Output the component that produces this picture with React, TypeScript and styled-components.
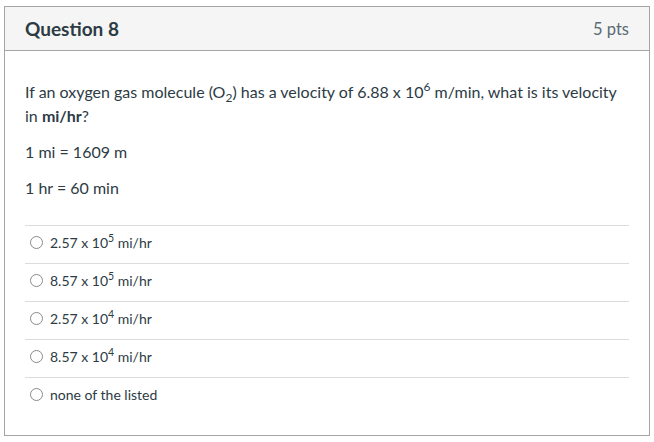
import React from "react";
import styled, { createGlobalStyle } from "styled-components";

const GlobalStyle = createGlobalStyle`
    html, body {
        margin: 0;
        padding: 0;
        background: #ffffff;
    }
    body {
        font-family: Lato, "Noto Sans", sans-serif;
        color: #2d3b45;
    }
`;

type Answer = {
    id: string;
    label: React.ReactNode;
};

const answers: Answer[] = [
    { id: "a1", label: <>2.57 x 10<Sup>5</Sup> mi/hr</> },
    { id: "a2", label: <>8.57 x 10<Sup>5</Sup> mi/hr</> },
    { id: "a3", label: <>2.57 x 10<Sup>4</Sup> mi/hr</> },
    { id: "a4", label: <>8.57 x 10<Sup>4</Sup> mi/hr</> },
    { id: "a5", label: <>none of the listed</> },
];

export default function App() {
    return (
        <Page>
            <GlobalStyle />
            <QuestionCard>
                <Header>
                    <Title>Question 8</Title>
                    <Points>5 pts</Points>
                </Header>
                <Body>
                    <Text>
                        If an oxygen gas molecule (O<Sub>2</Sub>) has a velocity of 6.88 x 10
                        <Sup>6</Sup> m/min, what is its velocity in <strong>mi/hr</strong>?
                    </Text>
                    <Text>1 mi = 1609 m</Text>
                    <Text>1 hr = 60 min</Text>
                    <AnswerList>
                        {answers.map((a) => (
                            <AnswerRow key={a.id}>
                                <Radio type="radio" name="q8" id={a.id} />
                                <AnswerLabel htmlFor={a.id}>{a.label}</AnswerLabel>
                            </AnswerRow>
                        ))}
                    </AnswerList>
                </Body>
            </QuestionCard>
        </Page>
    );
}

function Sup({ children }: { children: React.ReactNode }) {
    return <SupText>{children}</SupText>;
}

function Sub({ children }: { children: React.ReactNode }) {
    return <SubText>{children}</SubText>;
}

const SupText = styled.span`
    display: inline-block;
    font-size: 0.75em;
    line-height: 1;
    transform: translateY(-0.6em);
`;

const SubText = styled.span`
    display: inline-block;
    font-size: 0.75em;
    line-height: 1;
    transform: translateY(0.3em);
`;

const Page = styled.div`
    padding: 6px 4px 0 4px;
    width: 654px;
    box-sizing: border-box;
`;

const QuestionCard = styled.div`
    width: 646px;
    height: 430px;
    box-sizing: border-box;
    border: 1px solid #a5a5a5;
    background: #ffffff;
`;

const Header = styled.div`
    display: flex;
    align-items: center;
    justify-content: space-between;
    height: 43px;
    padding: 0 20px;
    background: #f5f5f5;
    border-bottom: 1px solid #a5a5a5;
`;

const Title = styled.h2`
    margin: 0;
    font-size: 19px;
    font-weight: 700;
    color: #2d3b45;
`;

const Points = styled.span`
    font-size: 16.5px;
    color: #5b6a74;
`;

const Body = styled.div`
    padding: 29px 20px 0 20px;
`;

const Text = styled.p`
    margin: 0 0 12px 0;
    font-size: 16px;
    line-height: 24px;
    color: #2d3b45;
`;

const AnswerList = styled.div`
    margin-top: 25px;
`;

const AnswerRow = styled.div`
    display: flex;
    align-items: center;
    height: 38px;
    padding: 0 0 4px 5px;
    box-sizing: border-box;
    border-top: 1px solid #dcdcdc;
`;

const Radio = styled.input`
    appearance: none;
    flex-shrink: 0;
    width: 13px;
    height: 13px;
    margin: 0 7px 0 0;
    border: 1px solid #8a8a8a;
    border-radius: 50%;
    background: #ffffff;
    box-sizing: border-box;
`;

const AnswerLabel = styled.label`
    font-size: 14px;
    line-height: 18px;
    color: #2d3b45;
`;
